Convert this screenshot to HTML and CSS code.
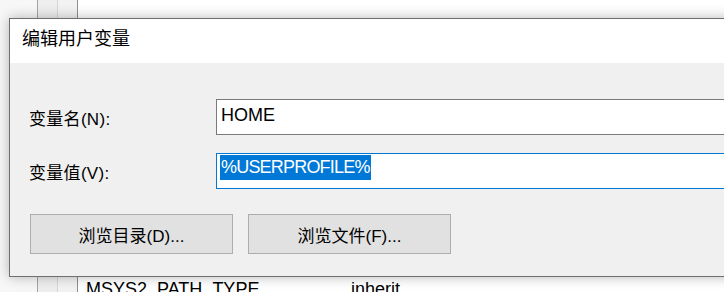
FILE: index.html
```html
<!DOCTYPE html>
<html lang="zh-CN">
<head>
  <meta charset="UTF-8">
  <title>编辑用户变量</title>
  <link rel="stylesheet" href="styles.css">
</head>
<body>
  <div class="desktop">
    <!-- list window behind the dialog -->
    <div class="list-window">
      <div class="gutter">
        <div class="col col-a"></div>
        <div class="col col-b"></div>
        <div class="col col-c"></div>
      </div>
      <div class="rows">
        <div class="row">
          <span class="row-name">MSYS2_PATH_TYPE</span>
          <span class="row-value">inherit</span>
        </div>
      </div>
    </div>

    <div class="dialog">
      <div class="dialog-title">编辑用户变量</div>
      <div class="dialog-body">
        <div class="field">
          <label class="field-label">变量名(N):</label>
          <div class="text-box">HOME</div>
        </div>
        <div class="field">
          <label class="field-label">变量值(V):</label>
          <div class="text-box focused"><span class="selected">%USERPROFILE%</span></div>
        </div>
        <div class="button-row">
          <button class="win-button">浏览目录(D)...</button>
          <button class="win-button">浏览文件(F)...</button>
        </div>
      </div>
    </div>
  </div>
</body>
</html>
```

FILE: styles.css
```css
body {
  margin: 0;
  font-family: "Liberation Sans", "Noto Sans CJK SC", sans-serif;
  color: #000;
  background: #fff;
}

.desktop {
  position: relative;
  width: 724px;
  height: 292px;
  overflow: hidden;
}

.list-window {
  display: flex;
  height: 100%;
  background: #fff;
}

.gutter {
  display: flex;
  height: 100%;
}

.col {
  height: 100%;
  box-sizing: border-box;
}

.col-a {
  width: 38px;
  background: #f7f7f7;
  border-right: 1px solid #a3a3a3;
}

.col-b {
  width: 20px;
  background: #eeeeee;
  border-right: 1px solid #d6d6d6;
}

.col-c {
  width: 20px;
  background: #f2f2f2;
  border-right: 1px solid #8f8f8f;
}

.rows {
  flex: 1;
  padding-top: 277px;
}

.row {
  display: flex;
  height: 24px;
  line-height: 24px;
  font-size: 18px;
  padding-left: 8px;
}

.row-name {
  width: 265px;
}

/* the dialog sits over the list window */
.dialog {
  position: absolute;
  left: 9px;
  top: 18px;
  width: 760px;
  border: 1px solid #6f6f6f;
  background: #f0f0f0;
  box-shadow: 0 0 12px rgba(0,0,0,0.28);
}

.dialog-title {
  height: 44px;
  line-height: 40px;
  padding-left: 12px;
  font-size: 18px;
  background: #fff;
}

.dialog-body {
  height: 213px;
  box-sizing: border-box;
  padding: 36px 0 0 19px;
}

.field {
  display: flex;
  align-items: center;
  margin-bottom: 18px;
}

.field-label {
  width: 187px;
  font-size: 17px;
  letter-spacing: 0.3px;
}

.text-box {
  flex: 1;
  height: 36px;
  box-sizing: border-box;
  border: 1px solid #7a7a7a;
  background: #fff;
  padding-left: 4px;
  font-size: 18px;
  line-height: 30px;
}

.text-box.focused {
  border-color: #0078d7;
  padding-left: 3px;
  line-height: 25px;
}

.selected {
  display: inline-block;
  height: 25px;
  margin-top: 1px;
  padding: 0 1px;
  letter-spacing: -0.8px;
  background: #0078d7;
  color: #fff;
}

.button-row {
  display: flex;
  gap: 15px;
  margin-top: 25px;
  padding-left: 1px;
}

.win-button {
  width: 203px;
  height: 40px;
  box-sizing: border-box;
  background: #e1e1e1;
  border: 1px solid #adadad;
  font-family: "Liberation Sans", "Noto Sans CJK SC", sans-serif;
  font-size: 17px;
  color: #000;
  padding: 0;
}
```
